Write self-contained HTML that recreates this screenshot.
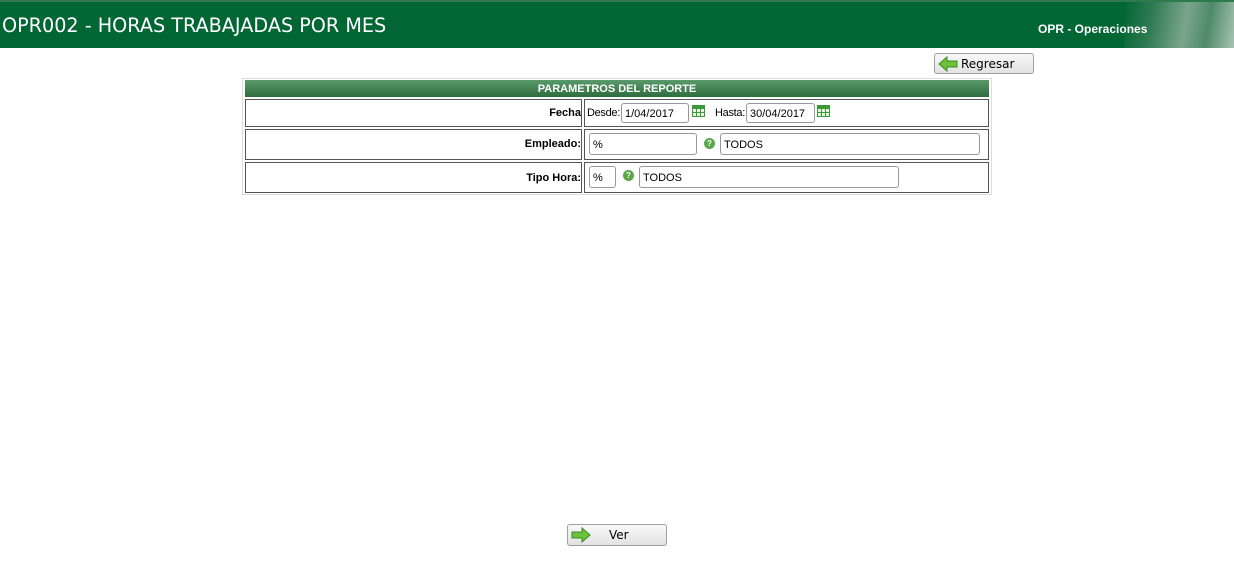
<!DOCTYPE html>
<html><head><meta charset="utf-8"><style>
*{box-sizing:border-box;margin:0;padding:0}
body{width:1234px;height:573px;background:#fff;position:relative;font-family:"Liberation Sans",sans-serif;overflow:hidden}
.abs{position:absolute}
#hdr{left:0;top:0;width:1234px;height:48px;background:#006633;border-top:2px solid #2f7a4d}
#hdr .t{left:2px;top:12px;color:#fff;font-size:19.2px;font-family:"DejaVu Sans",sans-serif}
#hdr .img{right:0;top:0;width:110px;height:46px;background:linear-gradient(100deg,#006633 0%,#2f7a52 25%,#7aa58c 55%,#4f8a6a 75%,#a8c4b2 100%)}
#hdr .o{left:1038px;top:20px;color:#fff;font-weight:bold;font-size:12px;font-family:"Liberation Sans",sans-serif}
.btn{border:1px solid #a0a0a0;border-radius:3px;background:linear-gradient(#f8f8f8,#e2e2e2);font-size:12px;color:#000;font-family:"DejaVu Sans",sans-serif}
.btn span{position:absolute;top:3px}
.lbl{font-family:"Liberation Sans",sans-serif;font-size:11px;z-index:2}
.cell{border:1px solid #555}
.inp{border:1px solid #999;border-radius:3px;background:#fff;font-size:11px;padding-left:3px;line-height:18px;font-family:"Liberation Sans",sans-serif}
.cal{width:13px;height:12px;background-color:#e8f4e0;border:1px solid #3a9a3a;background-image:linear-gradient(90deg,transparent 3px,#3a9a3a 3px,#3a9a3a 4px,transparent 4px,transparent 7px,#3a9a3a 7px,#3a9a3a 8px,transparent 8px),linear-gradient(#3a9a3a 0,#3a9a3a 3px,transparent 3px,transparent 6px,#3a9a3a 6px,#3a9a3a 7px,transparent 7px)}
.q{width:11px;height:11px;border-radius:50%;background:#5aa74a;color:#fff;font-size:8px;font-weight:bold;text-align:center;line-height:11px}
</style></head><body>
<div id="hdr" class="abs"><div class="abs t">OPR002 - HORAS TRABAJADAS POR MES</div><div class="abs img"></div><div class="abs o">OPR - Operaciones</div></div>

<div class="abs btn" style="left:934px;top:53px;width:100px;height:21px">
<svg class="abs" style="left:3px;top:2px" width="20" height="16"><path d="M1 8 L9 1 L9 5 L19 5 L19 11 L9 11 L9 15 Z" fill="#6cc23a" stroke="#3d8a22"/></svg>
<span style="left:26px">Regresar</span></div>

<div class="abs" style="left:242px;top:78px;width:750px;height:117px;border:1px solid #ddd"></div>
<div class="abs" style="left:245px;top:80px;width:744px;height:17px;background:linear-gradient(#5a9a6a,#2e6e3e);color:#fff;font-weight:bold;font-size:11px;text-align:center;line-height:18px;font-family:'Liberation Sans',sans-serif">PARAMETROS DEL REPORTE</div>

<div class="abs cell" style="left:245px;top:99px;width:337px;height:28px"></div>
<div class="abs cell" style="left:584px;top:99px;width:405px;height:28px"></div>
<div class="abs cell" style="left:245px;top:129px;width:337px;height:31px"></div>
<div class="abs cell" style="left:584px;top:129px;width:405px;height:31px"></div>
<div class="abs cell" style="left:245px;top:162px;width:337px;height:31px"></div>
<div class="abs cell" style="left:584px;top:162px;width:405px;height:31px"></div>

<div class="abs lbl" style="right:653px;top:107px;font-weight:bold">Fecha</div>
<div class="abs lbl" style="right:614px;top:107px;letter-spacing:-0.3px">Desde:</div>
<div class="abs inp" style="left:621px;top:103px;width:68px;height:20px;line-height:20px">1/04/2017</div>
<div class="abs cal" style="left:692px;top:105px"></div>
<div class="abs lbl" style="right:489px;top:107px;letter-spacing:-0.3px">Hasta:</div>
<div class="abs inp" style="left:746px;top:103px;width:69px;height:20px;line-height:20px">30/04/2017</div>
<div class="abs cal" style="left:817px;top:105px"></div>

<div class="abs lbl" style="right:653px;top:138px;font-weight:bold">Empleado:</div>
<div class="abs inp" style="left:589px;top:133px;width:108px;height:22px;line-height:22px">%</div>
<div class="abs q" style="left:704px;top:138px">?</div>
<div class="abs inp" style="left:720px;top:133px;width:260px;height:22px;line-height:22px">TODOS</div>

<div class="abs lbl" style="right:653px;top:172px;font-weight:bold">Tipo Hora:</div>
<div class="abs inp" style="left:589px;top:166px;width:27px;height:22px;line-height:22px">%</div>
<div class="abs q" style="left:623px;top:170px">?</div>
<div class="abs inp" style="left:639px;top:166px;width:260px;height:22px;line-height:22px">TODOS</div>

<div class="abs btn" style="left:567px;top:524px;width:100px;height:22px">
<svg class="abs" style="left:3px;top:2px" width="20" height="16"><path d="M19 8 L11 1 L11 5 L1 5 L1 11 L11 11 L11 15 Z" fill="#6cc23a" stroke="#3d8a22"/></svg>
<span style="left:41px">Ver</span></div>
</body></html>
